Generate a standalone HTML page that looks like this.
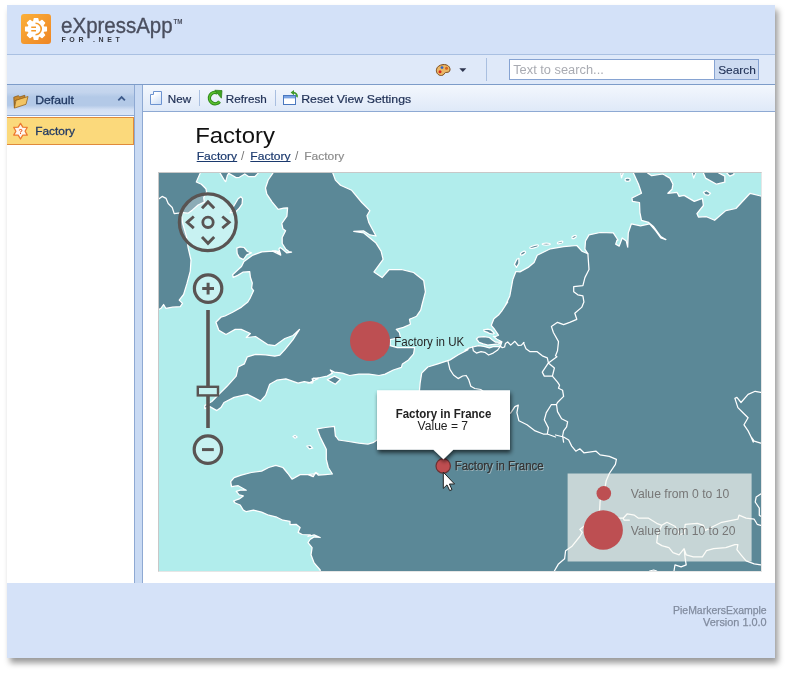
<!DOCTYPE html>
<html><head><meta charset="utf-8">
<style>
*{box-sizing:border-box;margin:0;padding:0}
html,body{width:788px;height:673px;background:#fff;overflow:hidden;font-family:"Liberation Sans",sans-serif;}
#win{position:absolute;left:7px;top:5px;width:768px;height:653px;background:#fff;box-shadow:3px 5px 6px rgba(0,0,0,.4)}
.abs{position:absolute}
#hdr{left:0;top:0;width:768px;height:50px;background:#d3e1f8;border-bottom:1px solid #a9c0e2}
#bar2{left:0;top:50px;width:768px;height:30px;background:#dfe9f9;border-bottom:1px solid #7d9cc9}
#side{left:0;top:80px;width:127px;height:498px;background:#fff;}
#sidehd{left:0;top:79px;width:127px;height:32px;background:linear-gradient(#c9d9f0 0%,#c3d4ed 25%,#b3c9e7 40%,#b3c9e7 68%,#d3e0f4 82%,#d9e5f6 100%);border-bottom:1px solid #8ea9d3;border-top:1px solid #7d9cc9}
#sideit{left:0;top:112px;width:127px;height:28px;background:#fbd97b;border:1px solid #e08a3a;border-left:none}
#split{left:127px;top:80px;width:9px;height:498px;background:#c9daf3;border-right:1px solid #8ea9d3;border-left:1px solid #8ea9d3}
#tb{left:136px;top:80px;width:632px;height:27px;background:linear-gradient(#f3f7fd,#dfe9f8);border-bottom:1px solid #8ea9d3}
#foot{left:0;top:578px;width:768px;height:75px;background:#d5e2f8}
.t{position:absolute;white-space:nowrap;color:#1e2f54;font-size:13px;line-height:16px}
svg{position:absolute;left:0;top:0;overflow:visible;will-change:transform}
.ld{fill:#5b8897;stroke:#fff;stroke-width:1.25;stroke-linejoin:round}
.bd{fill:none;stroke:#fff;stroke-width:1.25;stroke-linejoin:round;stroke-linecap:round}
</style></head><body>
<div id="win">
<div id="hdr" class="abs"></div>
<div id="bar2" class="abs"></div>
<div id="side" class="abs"></div>
<div id="sidehd" class="abs"></div>
<div id="sideit" class="abs"></div>
<div id="split" class="abs"></div>
<div id="tb" class="abs"></div>
<div id="foot" class="abs"></div>
</div>

<!-- chrome: texts & icons -->
<svg width="788" height="673" viewBox="0 0 788 673" style="left:0;top:0">
<defs><linearGradient id="pg" x1="0" y1="0" x2="0.6" y2="1"><stop offset="0.3" stop-color="#fff"/><stop offset="1" stop-color="#d3e2f7"/></linearGradient></defs>
<g font-family="Liberation Sans, sans-serif">
<!-- logo -->
<rect x="21" y="14" width="30" height="30" rx="3" fill="url(#lg)"/>
<g transform="translate(36 29) scale(.95)" fill="#fff">
<path id="gear" d="M7.94 -2.43 L11.03 -1.94 L11.03 1.94 L7.94 2.43 L7.33 3.9 L9.17 6.42 L6.42 9.17 L3.9 7.33 L2.43 7.94 L1.94 11.03 L-1.94 11.03 L-2.43 7.94 L-3.9 7.33 L-6.42 9.17 L-9.17 6.42 L-7.33 3.9 L-7.94 2.43 L-11.03 1.94 L-11.03 -1.94 L-7.94 -2.43 L-7.33 -3.9 L-9.17 -6.42 L-6.42 -9.17 L-3.9 -7.33 L-2.43 -7.94 L-1.94 -11.03 L1.94 -11.03 L2.43 -7.94 L3.9 -7.33 L6.42 -9.17 L9.17 -6.42 L7.33 -3.9 Z" stroke="#fff" stroke-width="1.2" stroke-linejoin="round"/>
<path d="M-0.5 -6 A6 6 0 0 1 -0.5 6" fill="none" stroke="#f39a2b" stroke-width="1.7"/>
<path d="M-5 -1.9 H0 M-5 1.9 H0" stroke="#f39a2b" stroke-width="1.5" fill="none"/>
</g>
<text x="61.1" y="32.7" font-size="21.5" fill="#4a4e5e" stroke="#4a4e5e" stroke-width=".35" textLength="111.5" lengthAdjust="spacingAndGlyphs">eXpressApp</text>
<text x="173.5" y="24.2" font-size="8" font-weight="bold" fill="#4a4e5e" textLength="9" lengthAdjust="spacingAndGlyphs">TM</text>
<text x="61.4" y="41.9" font-size="7" font-weight="bold" fill="#33363f" textLength="58.5" lengthAdjust="spacing">FOR .NET</text>
<!-- palette -->
<path d="M443 64.6 C447.5 64.2 450.3 66.8 450 70 C449.7 72.6 447.2 72.3 445.6 72.5 C444 72.8 444.6 75.2 441.5 75.5 C438 75.7 436 72.5 436.4 69.8 C436.8 66.8 439.5 64.9 443 64.6 Z" fill="#eab765" stroke="#7b4b1e" stroke-width="1"/>
<circle cx="440" cy="71.8" r="1.5" fill="#d9281e"/><circle cx="442" cy="67.6" r="1.4" fill="#2f62c9"/><circle cx="446.5" cy="68.2" r="1.5" fill="#d9641e"/>
<path d="M459.3 68.2 H466.3 L462.8 71.9 Z" fill="#2f3650"/>
<path d="M486.5 58 V81" stroke="#a9bfe0" stroke-width="1"/>
<!-- search -->
<rect x="509.5" y="59.5" width="205" height="20" fill="#fff" stroke="#86a3d2"/>
<rect x="714.5" y="59.5" width="44" height="20" fill="#cddbf1" stroke="#86a3d2"/>
<text x="513.2" y="73.5" font-size="12" fill="#a9abb2" textLength="90.6" lengthAdjust="spacingAndGlyphs">Text to search...</text>
<text x="718.2" y="73.5" font-size="11.3" fill="#1e2f54" stroke="#1e2f54" stroke-width=".12" textLength="37.7" lengthAdjust="spacingAndGlyphs">Search</text>
<!-- sidebar -->
<g transform="translate(12.8 93.7)">
<path d="M1 3.5 L5.5 2 L7 3.2 L12 1.6 V4 L2.2 7 L1.6 14.2 Z" fill="#c98a2e" stroke="#8a5a17" stroke-width=".8" stroke-linejoin="round"/>
<path d="M1.6 14.4 L3.2 6.6 L15.2 2.8 L13.2 10.6 Z" fill="#f2c463" stroke="#9a6418" stroke-width=".8" stroke-linejoin="round"/>
</g>
<text x="35.2" y="103.6" font-size="11.3" fill="#223a63" stroke="#223a63" stroke-width=".3" textLength="38.8" lengthAdjust="spacingAndGlyphs">Default</text>
<path d="M118.3 100.3 L121.6 97 L124.9 100.3" fill="none" stroke="#3d5a8a" stroke-width="1.8"/>
<g transform="translate(20.5 131.2)">
<path d="M0.0 -7.8 L2.3 -4.0 L6.8 -3.9 L4.6 0.0 L6.8 3.9 L2.3 4.0 L0.0 7.8 L-2.3 4.0 L-6.8 3.9 L-4.6 0.0 L-6.8 -3.9 L-2.3 -4.0 Z" fill="#fff6ee" stroke="#ee7a30" stroke-width="1.3" stroke-linejoin="round"/>
<text x="-2" y="3" font-size="7" font-weight="bold" fill="#e8541f">?</text>
</g>
<text x="35.2" y="134.6" font-size="11.3" fill="#223a63" stroke="#223a63" stroke-width=".3" textLength="39.7" lengthAdjust="spacingAndGlyphs">Factory</text>
<!-- toolbar -->
<path d="M150.5 94.5 H153.5 V91.5 H161.5 V104.5 H150.5 Z" fill="url(#pg)" stroke="#6c93d0" stroke-width="1"/>
<text x="167.8" y="102.9" font-size="11.3" fill="#1e2f54" stroke="#1e2f54" stroke-width=".2" textLength="23.3" lengthAdjust="spacingAndGlyphs">New</text>
<path d="M199.5 90 V106 M275.5 90 V106" stroke="#a9bfe0"/>
<g>
<path d="M219.6 101.6 A5.7 5.7 0 1 1 217.6 92.9" fill="none" stroke="#2a8518" stroke-width="3.4"/>
<path d="M219.6 101.6 A5.7 5.7 0 1 1 217.6 92.9" fill="none" stroke="#5cc02e" stroke-width="1.6"/>
<path d="M214.8 90.2 L222 90.6 L221.4 98.2 Z" fill="#3fa422" stroke="#2a7a16" stroke-width=".7" stroke-linejoin="round"/>
</g>
<text x="225.8" y="102.9" font-size="11.3" fill="#1e2f54" stroke="#1e2f54" stroke-width=".2" textLength="41" lengthAdjust="spacingAndGlyphs">Refresh</text>
<g transform="translate(283 90)">
<rect x="0.5" y="5.5" width="12" height="9" fill="#fff" stroke="#4a78bf"/>
<rect x="1" y="6" width="11" height="2.4" fill="#7aa3e3"/>
<path d="M14 7.2 A3.8 3.8 0 0 0 10.4 2.6" fill="none" stroke="#3f9a2a" stroke-width="1.7"/>
<path d="M11 0 L7.6 2.6 L11 5.2 Z" fill="#3f9a2a"/>
</g>
<text x="301.2" y="102.9" font-size="11.3" fill="#1e2f54" stroke="#1e2f54" stroke-width=".2" textLength="110" lengthAdjust="spacingAndGlyphs">Reset View Settings</text>
<!-- title -->
<text x="195.2" y="143.4" font-size="21.5" fill="#111" textLength="79.8" lengthAdjust="spacingAndGlyphs">Factory</text>
<text x="196.7" y="159.6" font-size="11.3" fill="#1c3a6e" stroke="#1c3a6e" stroke-width=".2" textLength="40.4" lengthAdjust="spacingAndGlyphs">Factory</text>
<path d="M196.7 161.5 H237.2 M250.3 161.5 H290.6" stroke="#1c3a6e" stroke-width="1"/>
<text x="241" y="159.6" font-size="12" fill="#777">/</text>
<text x="250.3" y="159.6" font-size="11.3" fill="#1c3a6e" stroke="#1c3a6e" stroke-width=".2" textLength="40.3" lengthAdjust="spacingAndGlyphs">Factory</text>
<text x="295" y="159.6" font-size="12" fill="#777">/</text>
<text x="304.3" y="159.6" font-size="11.3" fill="#8d8d8d" stroke="#8d8d8d" stroke-width=".2" textLength="40" lengthAdjust="spacingAndGlyphs">Factory</text>
<!-- footer -->
<text x="673" y="613.7" font-size="11.3" fill="#808b9e" stroke="#808b9e" stroke-width=".25" textLength="93.7" lengthAdjust="spacingAndGlyphs">PieMarkersExample</text>
<text x="703" y="626.4" font-size="11.3" fill="#808b9e" stroke="#808b9e" stroke-width=".25" textLength="63.7" lengthAdjust="spacingAndGlyphs">Version 1.0.0</text>
</g>
</svg>
<!-- map in absolute page coords -->
<div id="map" class="abs" style="left:158px;top:172px;width:604px;height:400px;background:#b1edec;overflow:hidden;border:1px solid #e6e6e6;border-top-color:#c8c8c8;border-left-color:#c8c8c8">
<svg width="602" height="398" viewBox="159 173 602 398" style="left:0;top:0">
<path class="ld" d="M156.9 170.9 L200.3 170.9 L200.3 173.1 L196.3 182 L201.4 184.2 L205.9 188.7 L206.6 192 L203.7 197.6 L204.3 202.1 L198.1 205 L192.5 209.9 L188.1 213.2 L182.5 212.5 L181.4 215.4 L182.9 224.3 L186.5 236.6 L188.1 247.7 L191 260 L190.3 271.1 L187 283.4 L183.6 294.5 L179.2 300.1 L182.5 303.4 L180.3 306.7 L172.5 307.2 L165.8 308.3 L163.6 304.5 L161.3 307.9 L158 310.1 L156.9 310.1Z M220.1 171.3 L220.1 173.1 L224.7 180.7 L225.7 181.6 L227.4 175.3 L228.7 173.3 L236.1 177.6 L239.4 177.3 L244.8 174 L248.8 176.7 L254.8 176.7 L258.2 173.1 L258.2 171.3Z M230.1 212.8 L233.4 206.8 L238.1 198.7 L240.8 196.7 L242.5 198.7 L242.1 204.1 L238.8 208.8 L236.1 211.4Z M236.8 248.2 L240.1 246.9 L244.1 247.5 L247.5 251.5 L251.5 252.9 L246.8 254.9 L243.4 259.6 L239.4 257.6 L237.2 253.6Z M272.9 171.3 L272.9 173.1 L268.2 180 L265.5 188 L266.8 194.1 L272.2 202.1 L278.2 209.4 L283.6 208.1 L287.6 207.8 L286.9 216.1 L283.6 220.8 L281.8 223.5 L282.9 228.8 L285.6 230.8 L282.2 237.5 L282.2 243.5 L285.6 248.9 L288.9 251.5 L291.6 252.2 L286.9 252.9 L282.9 249.5 L280.2 247.5 L278.9 248.9 L280.6 254.2 L276.2 250.9 L272.2 250.9 L280.8 255.1 L278.3 251.3 L269.4 251.3 L261.8 251.9 L252.9 255.1 L244 261.4 L241.5 266.5 L232.6 274.7 L233.2 277.3 L237.7 275.4 L242.8 272.2 L249.7 271.6 L250.4 277.3 L252.3 283 L251.6 288.1 L253.6 290.6 L250.4 297.6 L247.8 302 L241.5 307.1 L232.6 312.2 L225 316 L220.9 317.2 L215.9 322.3 L218.9 330.4 L226 334.5 L235.2 329.4 L241.2 329.4 L250.4 333.5 L246.3 337.5 L255.5 336.5 L267.6 344.6 L274.8 345.7 L284.9 338.5 L293 335.5 L299.5 329.4 L293 339.6 L284.9 349.7 L279.8 355.2 L274.8 356.2 L265.6 354.8 L255.5 354.4 L247.3 356.8 L244.3 363.9 L238.2 367 L236.2 376.1 L227 386.3 L218.9 394.4 L211.8 401.5 L204.7 405.6 L204.7 408.6 L209.8 406.6 L216.9 410.6 L220.9 407.6 L224 402.5 L234.1 397.4 L247.3 394.4 L253.4 397.4 L260.5 401.1 L265.6 395.4 L269.7 384.2 L276.8 380.2 L285.9 378.8 L298.1 383.2 L304.2 381.6 L312.3 383.2 L313.3 378.1 L318 378.8 L308 383.2 L313.1 382.2 L312.1 378.8 L320.2 377.5 L327.3 376.1 L332.4 373.1 L330.3 370 L334.4 372.1 L342.5 373.1 L349.6 375.5 L358.8 374.1 L368.9 374.1 L379.1 375.5 L385.2 374.1 L393.3 370 L401.4 367.4 L402.4 363.9 L408.5 359.9 L413.6 353.8 L414.6 347.7 L397.3 347.7 L390.2 345.7 L390.2 339.6 L400.4 337.5 L399.4 332.5 L396.3 329.4 L403.4 327.4 L410.5 324.3 L409.5 319.3 L416.6 316.2 L420.7 310.1 L421.7 306.1 L421.7 306 L425.4 291.8 L423.7 280.6 L413.6 272.5 L401.4 269.5 L389.2 269.5 L382.1 277.6 L374 271.9 L383.1 259.3 L381.1 251.2 L376 243.1 L363.8 232.9 L353.7 231.3 L363.8 230.9 L369.9 234.9 L376 236 L368.9 222.8 L366.9 215.7 L369.9 210.6 L361.8 202.5 L351.7 190.3 L340.5 185.2 L335.4 180.1 L332.8 173 L332.8 171Z M327.3 379.8 L334.4 376.1 L340.5 379.2 L335.4 384.2Z M320.2 577.1 L320.2 570 L314.1 562.9 L311 554.8 L312.1 547.7 L308 542.6 L310 539.5 L314.1 536.9 L320.2 537.5 L314.1 534.9 L308 536.5 L310.3 534.9 L302.2 534.5 L298.1 532.4 L300.1 527.4 L296.1 524.3 L290 524.7 L290 521.3 L282.9 520.2 L276.8 517.2 L268.7 515.2 L261.6 512.1 L253.4 510.1 L246.3 511.7 L243.3 510.1 L240.2 505 L235.2 503 L233.5 501 L239.2 498.9 L243.3 495.9 L239.2 494.9 L236.2 491.4 L240.2 490.2 L246.3 490.2 L238.2 485.7 L231.5 486.7 L230.7 481.7 L234.1 477.6 L241.2 475.2 L251.4 472.5 L261.6 471.1 L268.7 467.5 L275.8 465.4 L282.9 467.5 L287.9 473.5 L292 479.2 L300.1 474.6 L310.3 474.6 L313.3 476.6 L315.4 472.5 L318 473.5 L308 474.6 L313.1 476.6 L316.1 472.5 L318.2 475.2 L325.3 474.6 L332.4 474 L328.3 467.5 L326.3 459.3 L326.3 449.2 L323.2 443.1 L320.2 437 L317.1 428.9 L325.3 427.5 L334.4 426.3 L335.4 436 L336.4 437 L338.5 440 L348.6 441.5 L358.8 443.1 L367.9 444.1 L373 442.7 L377 440 L381.1 437 L409.5 407.6 L419.3 392.4 L420.1 383.2 L421.7 373.1 L427.8 367 L437.9 363.9 L450.1 359.9 L458.3 354.8 L468 349.7 L465 350.4 L468.8 348.1 L472.6 347 L478.7 345.6 L484 346.4 L489.4 347.9 L493.9 346.4 L498.5 346.7 L500.6 345.5 L501.9 341.8 L497 339.2 L493.3 336.3 L495.1 336.7 L498.5 335.2 L494.7 329.5 L491.3 325.3 L493.9 318.8 L498.5 315 L501.7 311.1 L507.7 302 L505.1 306 L509.8 295.9 L512.8 279.6 L515.9 271.5 L519.9 271.9 L528.1 267.4 L534.1 262.4 L537.2 255.2 L550.4 248.8 L563.6 246.7 L576.8 245.5 L581.9 251.2 L587.9 253.8 L584.9 249.2 L585.5 241 L589 234.9 L600.1 232.5 L613.3 232.9 L618 240 L617.1 240 L615.7 244.1 L619.2 246.1 L622.2 238 L626.3 241 L627.7 247.1 L628.3 232.9 L631.4 223.8 L640.5 225.8 L649.6 223.8 L655.7 230.9 L660.8 238 L665.9 239.6 L660.8 236.6 L653.7 226.8 L648.6 222.4 L641.5 220.3 L639.9 212.6 L639.5 202.5 L632.4 201.4 L632 198 L641.5 193.3 L638.5 184.2 L633.4 173 L633.4 171 L647.6 171 L647.6 173 L651.7 175.7 L662.8 174 L669.9 178.1 L673 184.2 L672 189.3 L667.9 193.3 L677 192.3 L679.1 196.4 L684.1 195.4 L694.3 201.4 L702.4 198.4 L703.4 205.5 L696.9 213.6 L698.4 217.1 L706.5 216.7 L714.6 220.3 L725.8 210.6 L735.9 208.5 L750.1 193.3 L760.7 196 L762.3 196 L765 575 L300 575Z M483.7 329.9 L487.8 329.1 L491.3 330.2 L494.3 333.3 L493.2 334 L490.1 333.7 L487.1 332.1 L484.4 331.4Z M476.4 339 L478.3 337.1 L484 336.7 L489.4 337.5 L492.4 340.1 L495.5 342.2 L501.2 342.3 L498.5 343.9 L493.9 344.3 L487.8 345.1 L483.3 343.9 L479.1 342.3Z M514.4 264.4 L516.9 259.3 L518.9 258.3 L518.9 263.4 L516.5 267.4Z M703.4 171 L703.4 173 L705.5 178.1 L716.6 184.2 L724.8 182.2 L724.8 176.1 L718.7 173 L718.7 171Z M726.8 171 L726.8 173 L729.8 176.1 L733.9 174.4 L733.9 171Z M692.3 171 L692.3 173 L693.7 178.1 L695.7 173 L695.7 171Z M703.4 192.3 L706.5 190.7 L710.5 193.3 L708.5 195.4 L705.1 194.7Z M620.8 172.8 L623.3 173 L621.5 177.9Z M293 436.6 L295.1 435.4 L297.1 437 L295.1 438.2Z M306.8 446.1 L310.3 445.5 L312.7 448.2 L309.3 448.8Z"/>
<path class="bd" d="M158 199.4 L162.1 196.4 L166.1 198.4 L168.2 203.5 L172.2 207.5 L174.2 213.6 L182.4 212.6 M472.6 347 L473.4 350.8 L476.4 353.1 L481 351.6 L484.8 352.3 L488.6 355 L493.2 353.1 L497.7 350 L500.4 346.2 L502.3 347.7 L504.6 347 L505.4 343.6 L507.7 342 L510.7 345.1 L514.9 341.3 L518.3 345.5 L521.4 345.1 L524 342.4 M587.9 253.8 L589 269.5 L584.9 277.6 L582.9 285.7 L573.7 286.7 L573.7 291.8 L577.8 294.8 L582.9 295.9 L583.9 301.9 L581.9 307 M583.9 302 L581.9 307.1 L574.8 313.2 L576.8 319.3 L569.7 322.3 L563.6 324.7 L557.5 322.3 L551.4 326.4 L553.4 332.5 L558.5 341.6 L557.5 350.7 L555.5 355.8 L556.9 356.8 L548.4 362.9 M523.4 342.6 L526 348.7 L530.1 351.7 L537.2 351.7 L542.3 355.8 L547.3 357.8 L548.4 362.9 L542.3 372.1 L544.3 376.1 L552.4 376.1 L554.4 368 L548.4 362.9 M552.4 376.1 L557.5 382.2 L559.5 385.2 L558.5 388.3 L562.6 390.3 L563.6 396.4 L557.5 402.5 L556.5 404.5 L551.4 404.5 L546.3 412.7 L544.3 419.8 L548.4 427.9 L547.3 434 L555.5 437 M556.5 404.5 L557.5 411.6 L561.6 418.8 L567.6 421.8 L566.6 426.9 L563.6 430.9 L562.6 436 L563.6 442.1 M447.9 360.8 L449.9 369.4 L453.5 375 L458.1 378.6 L462.6 376 L466.2 375.5 L468.7 379.6 L470.8 386.2 L474.8 388.5 L480.9 389.5 M481.4 389.9 L498.6 403.5 L510.4 413.3 L514.9 406.6 L518.3 405.1 L516.9 412.7 L518.9 420.8 L527 424.8 L535.2 430.9 L543.3 434 L547.3 434 L555.5 437 M555.5 435 L563.6 437 L568.7 440 L571.7 446.1 L575.8 451.2 L579.8 448.8 L583.9 452.8 L596.1 451.2 L600.1 454.9 L609.3 456.3 L616.4 459.3 L615.4 464.4 L609.3 473.5 L606.2 480.7 L605.2 486.7 L600.1 501 L599.7 509.1 L598.1 518.2 L583.9 526.3 L579.8 529.4 L582.3 532.4 L579.8 536.5 L571.7 546.6 L565.6 550.7 L564.6 558.8 L558.5 563.9 L554.4 571 M597.8 518.2 L623.2 518.2 L627.3 513.8 L634.4 515.2 L638.5 518.2 L648.6 518.2 L656.7 523.3 L661.8 525.3 L666.9 522.3 L675 526.3 L680.1 534.5 L684.1 533.4 L685.2 524.3 L697.3 523.3 L703.4 525.3 L705.5 530.4 L713.6 526.3 L721.7 522.3 L737.9 519.2 L739 515.2 L746.1 518.2 L754.2 519.2 L757.2 524.3 L760.7 525.3 M623.2 518.2 L624.2 520.2 L629.3 520.2 M661.8 525.3 L657.7 534.5 L656.7 542.6 L661.8 545.6 L668.9 547.7 L673 552.7 L679.1 554.8 L684.1 548.7 L686.2 554.8 L693.3 556.8 L702.4 556.8 L706.5 550.7 L713.6 548.7 L725.8 547.7 L734.9 544.6 L737.9 544.6 L736.9 549.7 L741 554.8 L746.1 560.9 L754.2 563.9 L760.7 564.9 M684.1 548.7 L685.2 558.8 L686.2 564.9 L681.1 566.9 L675 564.9 L674 571 M649.6 571 L653.7 570 L656.7 571 M751.1 437 L754.2 441.1 L760.7 443.1 M760.7 493.9 L756.2 496.9 L755.2 502 L759.3 508.1 L759.3 515.2 L760.7 516.2 M760.7 392.4 L755.2 391.3 L748.1 394.4 L741 402.5 L736.9 397.4 L734.9 398.4 L737.9 407.6 L743 412.7 L748.1 417.7 L744 424.8 L748.1 430.9 L751.1 437 L753.2 442.1"/>
<ellipse class="ld" cx="523.0" cy="253.2" rx="2.8" ry="1.4" transform="rotate(-30 523.0 253.2)"/>
<ellipse class="ld" cx="534.1" cy="246.7" rx="4.5" ry="1.2" transform="rotate(-15 534.1 246.7)"/>
<ellipse class="ld" cx="546.3" cy="244.1" rx="4.1" ry="1.0" transform="rotate(0 546.3 244.1)"/>
<ellipse class="ld" cx="560.1" cy="242.5" rx="2.8" ry="1.0" transform="rotate(-15 560.1 242.5)"/>
<ellipse class="ld" cx="574.1" cy="237.0" rx="2.4" ry="1.2" transform="rotate(-25 574.1 237.0)"/>
<ellipse class="ld" cx="627.6" cy="179.8" rx="2.6" ry="1.6" transform="rotate(0 627.6 179.8)"/>
</svg>
</div>

<!-- map controls, markers, tooltip, legend -->
<svg width="788" height="673" viewBox="0 0 788 673" style="left:0;top:0;pointer-events:none">
<defs>
<filter id="sh" x="-20%" y="-20%" width="140%" height="160%"><feGaussianBlur in="SourceAlpha" stdDeviation="2"/><feOffset dx="0.5" dy="2.5"/><feComponentTransfer><feFuncA type="linear" slope="0.65"/></feComponentTransfer><feMerge><feMergeNode/><feMergeNode in="SourceGraphic"/></feMerge></filter>
<linearGradient id="lg" x1="0" y1="0" x2="1" y2="1"><stop offset="0" stop-color="#fbb03a"/><stop offset="1" stop-color="#ee8524"/></linearGradient>
</defs>
<g font-family="Liberation Sans, sans-serif">
<!-- nav control -->
<g fill="none" stroke="#595453">
<circle cx="207.8" cy="222.3" r="28.4" stroke-width="3.3" fill="rgba(255,255,255,0.3)"/>
<circle cx="208" cy="222.3" r="5.2" stroke-width="2.8"/>
<path d="M202 208.2 L208 201.9 L214.2 208.2 M202 237 L208 243.3 L214.2 237 M193.8 216.5 L187.2 222.3 L193.8 228.2 M222.3 216.5 L229.2 222.3 L222.3 228.2" stroke-width="2.9"/>
<circle cx="208.1" cy="288.6" r="13.7" stroke-width="3.2" fill="rgba(255,255,255,0.3)"/>
<path d="M202.2 288.6 H214 M208.1 282.7 V294.5" stroke-width="3"/>
<path d="M208 310 V428" stroke-width="3.6"/>
<rect x="197.8" y="386.8" width="20.2" height="8.6" stroke-width="2.4" fill="#c3f0f0"/>
<circle cx="207.9" cy="449.6" r="13.7" stroke-width="3.2" fill="rgba(255,255,255,0.3)"/>
<path d="M202 449.6 H213.8" stroke-width="3"/>
</g>
<!-- UK marker -->
<circle cx="370" cy="341" r="20" fill="#bd4f52"/>
<text x="394.3" y="345.7" font-size="12" fill="#262626" textLength="70" lengthAdjust="spacingAndGlyphs">Factory in UK</text>
<!-- legend -->
<rect x="567.6" y="473.5" width="184" height="88" fill="rgba(250,250,244,0.67)"/>
<circle cx="603.8" cy="493.4" r="7.3" fill="#bd4f52"/>
<circle cx="603.2" cy="530" r="19.7" fill="#bd4f52"/>
<text x="630.7" y="497.5" font-size="12" fill="#777" textLength="98.5" lengthAdjust="spacingAndGlyphs">Value from 0 to 10</text>
<text x="630.7" y="534.5" font-size="12" fill="#777" textLength="104.8" lengthAdjust="spacingAndGlyphs">Value from 10 to 20</text>
<!-- France marker -->
<circle cx="443.2" cy="465.9" r="7.2" fill="#be4d50" stroke="#6a3234" stroke-width="1.2"/>
<!-- tooltip -->
<path d="M377 390.3 H510 V449.7 H453.3 L443.4 459.3 L433.5 449.7 H377 Z" fill="#fff" filter="url(#sh)"/>
<text x="395.7" y="417.9" font-size="12" font-weight="bold" fill="#222" textLength="95.6" lengthAdjust="spacingAndGlyphs">Factory in France</text>
<text x="417.6" y="429.7" font-size="12" fill="#222" textLength="50.4" lengthAdjust="spacingAndGlyphs">Value = 7</text>
<text x="455.5" y="470.6" font-size="12" fill="rgba(205,215,218,.6)" textLength="89" lengthAdjust="spacingAndGlyphs">Factory in France</text>
<text x="454.7" y="469.9" font-size="12" fill="#333" stroke="#333" stroke-width=".25" textLength="89" lengthAdjust="spacingAndGlyphs">Factory in France</text>
<!-- cursor -->
<path d="M443.3 472.2 V488.4 L447 484.9 L449.7 490.6 L452 489.6 L449.4 484 H454.6 Z" fill="#fff" stroke="#222" stroke-width="1" stroke-linejoin="round"/>
</g>
</svg>
</body></html>
